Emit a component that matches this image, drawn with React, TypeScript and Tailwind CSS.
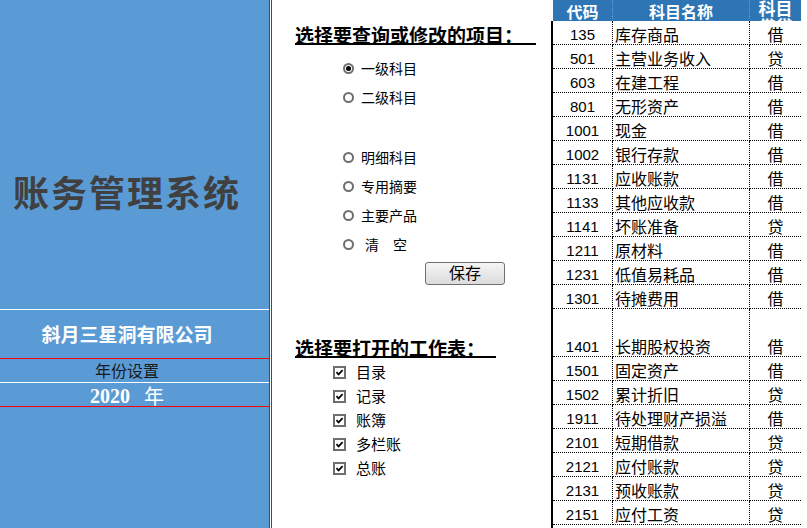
import React from "react";

const rows: [string, string, string, boolean?][] = [
  ["135", "库存商品", "借"],
  ["501", "主营业务收入", "贷"],
  ["603", "在建工程", "借"],
  ["801", "无形资产", "借"],
  ["1001", "现金", "借"],
  ["1002", "银行存款", "借"],
  ["1131", "应收账款", "借"],
  ["1133", "其他应收款", "借"],
  ["1141", "坏账准备", "贷"],
  ["1211", "原材料", "借"],
  ["1231", "低值易耗品", "借"],
  ["1301", "待摊费用", "借"],
  ["1401", "长期股权投资", "借", true],
  ["1501", "固定资产", "借"],
  ["1502", "累计折旧", "贷"],
  ["1911", "待处理财产损溢", "借"],
  ["2101", "短期借款", "贷"],
  ["2121", "应付账款", "贷"],
  ["2131", "预收账款", "贷"],
  ["2151", "应付工资", "贷"],
];

function Radio({ label, checked }: { label: string; checked?: boolean }) {
  return (
    <div className="h-[29px] flex items-center">
      <span className="w-[11px] h-[11px] rounded-full border-2 border-[#6e6e6e] bg-white flex items-center justify-center shrink-0">
        {checked && <span className="w-[5px] h-[5px] rounded-full bg-black" />}
      </span>
      <span className="ml-[7px] text-[14px] leading-[16px] text-black whitespace-pre">{label}</span>
    </div>
  );
}

function Check({ label }: { label: string }) {
  return (
    <div className="h-[24px] flex items-center">
      <span className="w-[13px] h-[13px] border-2 border-[#6e6e6e] bg-white flex items-center justify-center shrink-0">
        <svg width="9" height="9" viewBox="0 0 9 9">
          <path d="M1.5 4.2 L3.6 6.4 L7.6 2.2" fill="none" stroke="#000" strokeWidth="1.7" />
        </svg>
      </span>
      <span className="ml-[10px] text-[15px] leading-[17px] text-black">{label}</span>
    </div>
  );
}

export default function App() {
  return (
    <div className="flex w-[807px] h-[528px] overflow-hidden bg-white font-['Liberation_Sans','Noto_Sans_CJK_SC',sans-serif]">
      {/* Left panel */}
      <div className="w-[269px] shrink-0 bg-[#5B9BD5] flex flex-col">
        <div className="h-[309px] pr-[15px] pt-[173px] flex justify-center">
          <span className="text-[36px] leading-[36px] font-bold text-[#404040] tracking-[2px] font-['Noto_Sans_CJK_SC',sans-serif]">
            账务管理系统
          </span>
        </div>
        <div className="h-px bg-white" />
        <div className="h-[48px] pr-[15px] flex items-center justify-center text-white font-bold text-[19px] font-['Noto_Sans_CJK_SC',sans-serif]">
          斜月三星洞有限公司
        </div>
        <div className="h-px bg-[#FF0000]" />
        <div className="h-[23px] pr-[15px] flex items-end justify-center text-[16px] leading-[18px] text-[#1a1a1a] pb-[1px]">
          年份设置
        </div>
        <div className="h-px bg-white" />
        <div className="h-[23px] pr-[15px] flex items-center justify-center text-white font-bold text-[20px] leading-[22px] font-['Liberation_Serif','Noto_Sans_CJK_SC',serif] pt-[2px]">
          2020<span className="ml-[14px] font-['Noto_Sans_CJK_SC',sans-serif] font-normal">年</span>
        </div>
        <div className="h-px bg-[#FF0000]" />
        <div className="flex-1" />
      </div>
      <div className="w-[3px] shrink-0 border-x border-[#FF0000] bg-white" />

      {/* Middle panel */}
      <div className="w-[279px] shrink-0 flex flex-col items-start pl-[23px] pt-[26px]">
        <div className="w-[241px] border-b-2 border-black text-[19px] leading-[17px] font-bold text-black font-['Noto_Sans_CJK_SC',sans-serif]">
          选择要查询或修改的项目：
        </div>
        <div className="ml-[48px] mt-[9px] flex flex-col">
          <Radio label="一级科目" checked />
          <Radio label="二级科目" />
          <div className="h-[31px]" />
          <Radio label="明细科目" />
          <Radio label="专用摘要" />
          <Radio label="主要产品" />
          <Radio label={" 清　空"} />
        </div>
        <button className="ml-[130px] mt-[3px] w-[80px] h-[23px] border border-[#707070] rounded-[3px] bg-linear-to-b from-[#f5f5f5] to-[#dcdcdc] text-[16px] leading-[21px] text-center text-black">
          保存
        </button>
        <div className="mt-[54px] w-[201px] border-b-2 border-black text-[19px] leading-[17px] font-bold text-black font-['Noto_Sans_CJK_SC',sans-serif]">
          选择要打开的工作表：
        </div>
        <div className="ml-[38px] mt-[2px] flex flex-col">
          <Check label="目录" />
          <Check label="记录" />
          <Check label="账簿" />
          <Check label="多栏账" />
          <Check label="总账" />
        </div>
      </div>

      {/* Table */}
      <div className="w-[250px] shrink-0 flex flex-col">
        <div className="ml-[2px] h-[21px] shrink-0 overflow-hidden bg-[#2E75B6] grid grid-cols-[60px_137px_51px] grid-rows-[21px] text-white font-bold text-[16px] font-['Noto_Sans_CJK_SC',sans-serif]">
          <div className="h-[21px] flex items-center justify-center border-r border-dotted border-white/30 leading-[18px]">代码</div>
          <div className="h-[21px] flex items-center justify-center border-r border-dotted border-white/30 leading-[18px]">科目名称</div>
          <div className="h-[21px] overflow-hidden flex flex-col items-center text-[17px] leading-[18px]">
            <span className="-mt-[1px]">科目</span>
            <span>借贷</span>
          </div>
        </div>
        <div className="flex-1 border-l-2 border-black">
          {rows.map(([code, name, dir, tall]) => (
            <div
              key={code}
              className={`grid grid-cols-[60px_137px_51px] ${tall ? "h-[48px]" : "h-[24px]"}`}
            >
              <div className="flex items-end justify-center border-r border-b border-dotted border-black pb-[1px] text-[15px] leading-[17px] text-black">
                {code}
              </div>
              <div className="flex items-end pl-[2px] border-r border-b border-dotted border-black pb-[1px] text-[16px] leading-[17px] text-black font-['Noto_Sans_CJK_SC',sans-serif] whitespace-nowrap overflow-hidden">
                {name}
              </div>
              <div className="flex items-end justify-center border-b border-dotted border-black pb-[1px] text-[16px] leading-[17px] text-black font-['Noto_Sans_CJK_SC',sans-serif]">
                {dir}
              </div>
            </div>
          ))}
        </div>
      </div>
    </div>
  );
}
